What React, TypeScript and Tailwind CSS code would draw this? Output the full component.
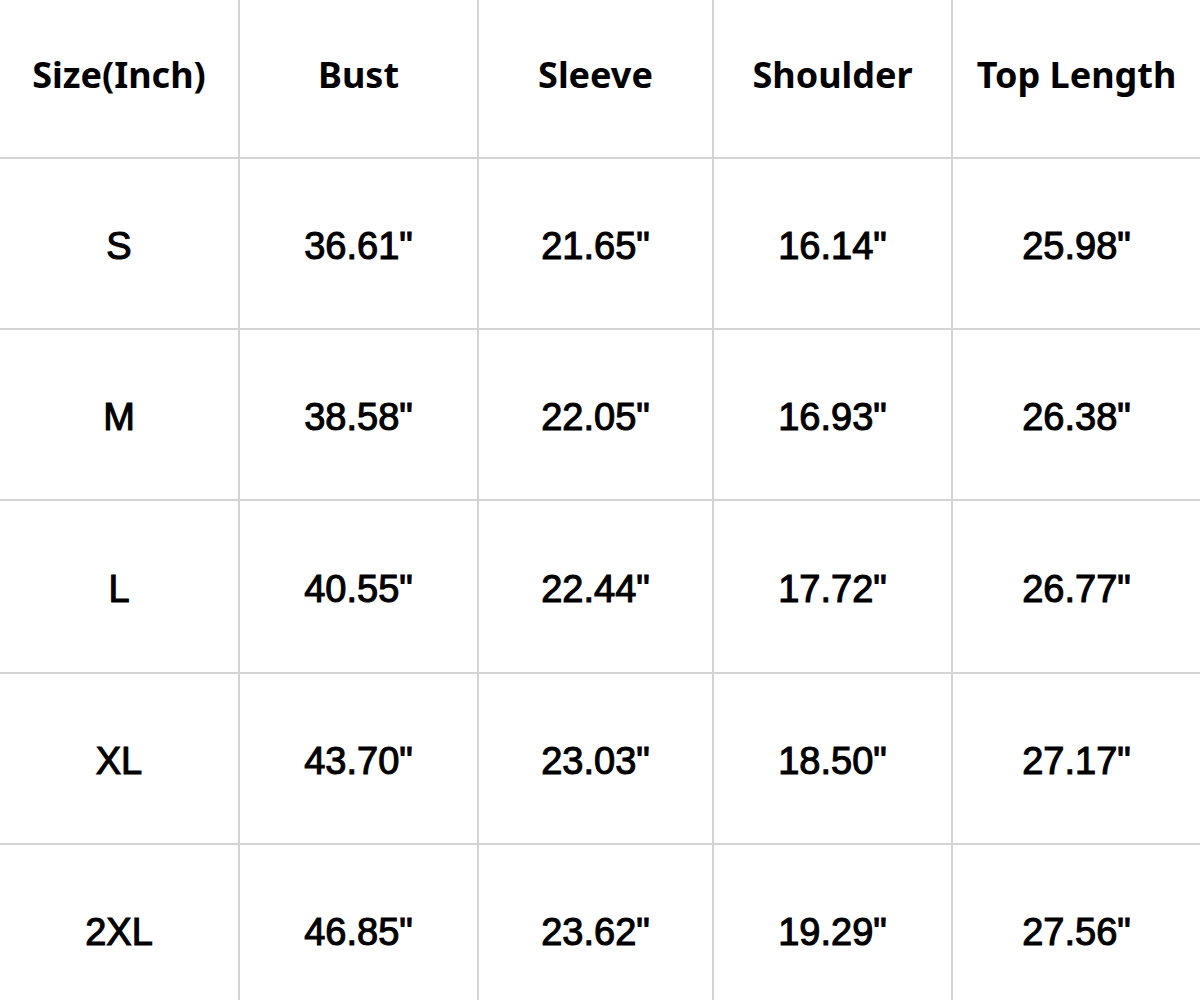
import React from "react";

const headers = ["Size(Inch)", "Bust", "Sleeve", "Shoulder", "Top Length"];
const rows = [
  ["S", '36.61"', '21.65"', '16.14"', '25.98"'],
  ["M", '38.58"', '22.05"', '16.93"', '26.38"'],
  ["L", '40.55"', '22.44"', '17.72"', '26.77"'],
  ["XL", '43.70"', '23.03"', '18.50"', '27.17"'],
  ["2XL", '46.85"', '23.62"', '19.29"', '27.56"'],
];
const rowH = ["h-[171px]", "h-[171px]", "h-[173px]", "h-[171px]", "h-[170px]"];

export default function App() {
  return (
    <div className="w-[1200px] h-[1000px] overflow-hidden bg-white text-black">
      <div className="grid grid-cols-[240px_239px_235px_239px_1fr]">
        {headers.map((h, i) => (
          <div
            key={h}
            className={`h-[159px] flex items-center justify-center border-b-2 border-[#d4d4d4] text-[36px] font-bold pb-[8px] ${i < 4 ? "border-r-2" : ""}`}
            style={{ fontFamily: '"Noto Sans", "Open Sans", sans-serif' }}
          >
            {h}
          </div>
        ))}
        {rows.map((r, ri) =>
          r.map((c, ci) => (
            <div
              key={`${ri}-${ci}`}
              className={`${rowH[ri]} flex items-center justify-center border-[#d4d4d4] text-[38px] font-normal pt-[5px] [-webkit-text-stroke:1.1px_#000] ${ci < 4 ? "border-r-2" : ""} ${ri < 4 ? "border-b-2" : ""}`}
              style={{ fontFamily: '"Liberation Sans", Arial, sans-serif' }}
            >
              {c}
            </div>
          ))
        )}
      </div>
    </div>
  );
}
